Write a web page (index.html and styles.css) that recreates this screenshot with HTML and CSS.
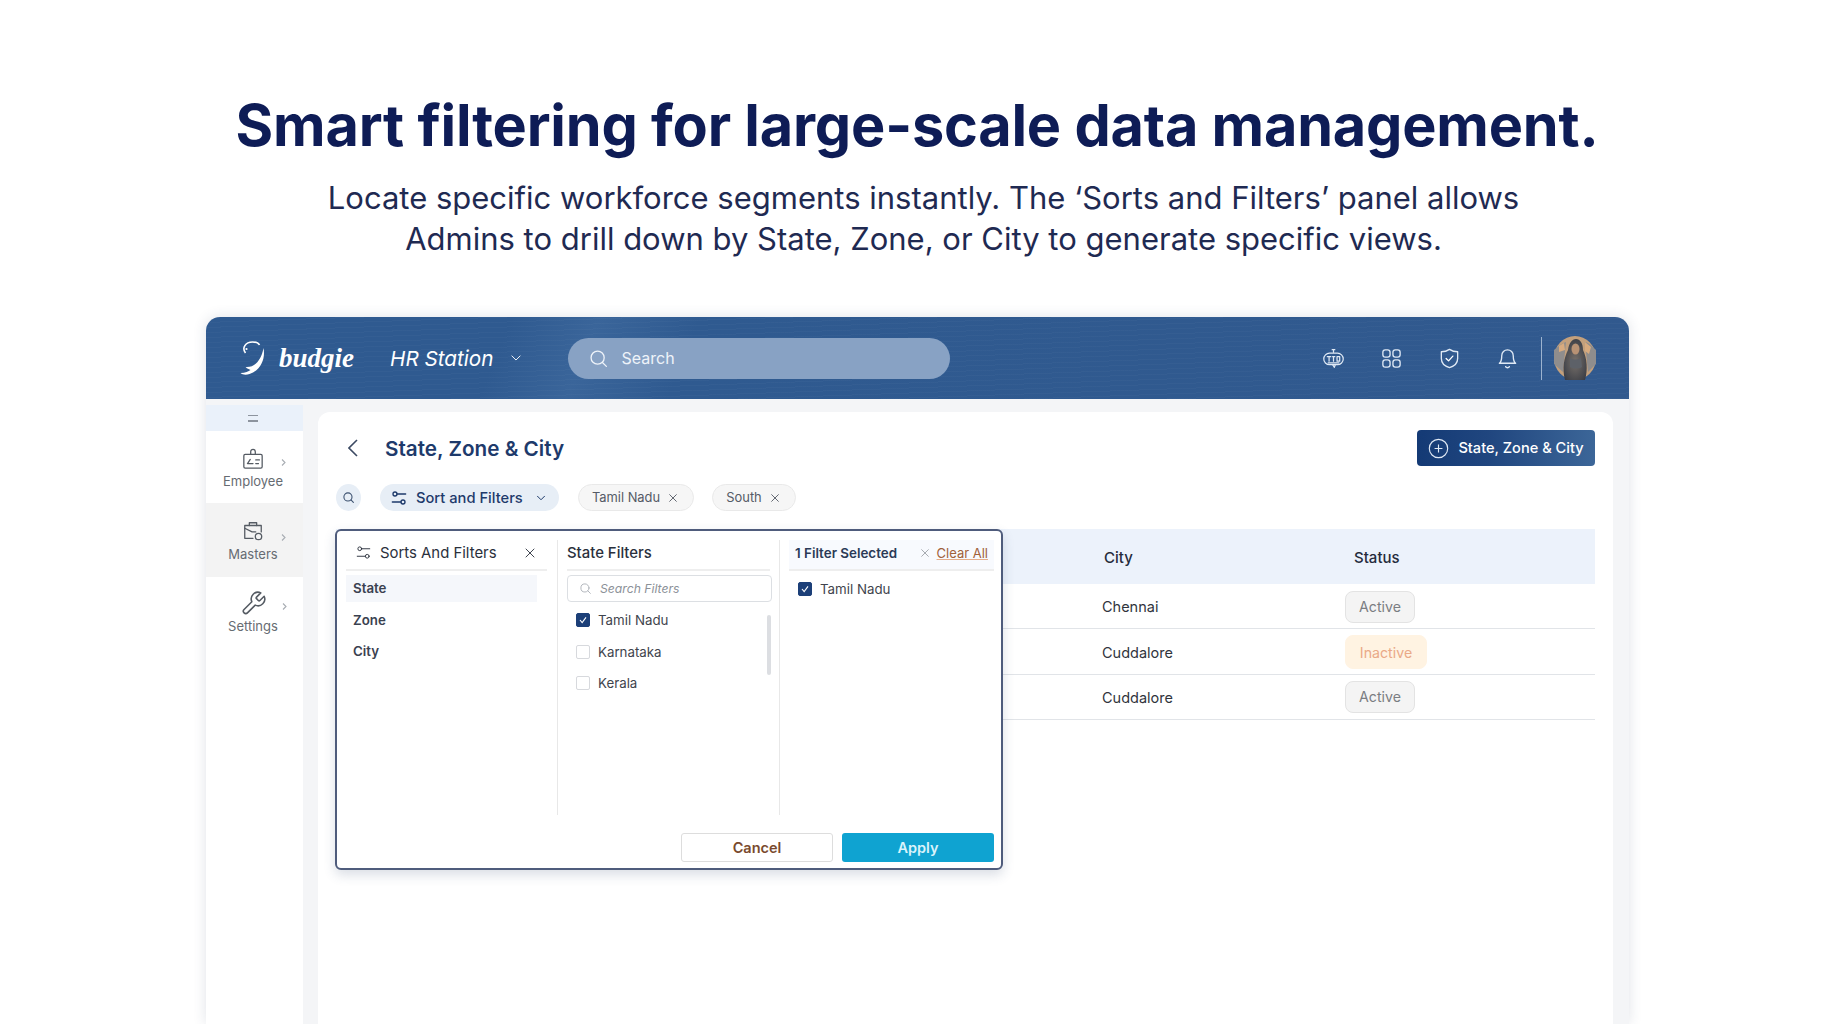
FILE: index.html
```html
<!DOCTYPE html>
<html>

<head>
    <title>HR Station - State, Zone &amp; City</title>
    <link rel="stylesheet" href="styles.css">
</head>

<body>
    <svg class="sprites" width="0" height="0">
        <symbol id="i-search" viewBox="0 0 24 24"><circle cx="11" cy="11" r="7.5"/><path d="M16.5 16.5 21 21"/></symbol>
        <symbol id="i-down" viewBox="0 0 24 24"><path d="M5 8.5l7 7 7-7"/></symbol>
        <symbol id="i-right" viewBox="0 0 24 24"><path d="M8 4l8 8-8 8"/></symbol>
        <symbol id="i-x" viewBox="0 0 24 24"><path d="M4 4l16 16M20 4 4 20"/></symbol>
        <symbol id="i-sliders" viewBox="0 0 24 24"><circle cx="6" cy="6" r="3"/><path d="M9 6h13M2 18h13"/><circle cx="18" cy="18" r="3"/></symbol>
    </svg>

    <header class="hero">
        <h1>Smart filtering for large-scale data management.</h1>
        <p>Locate specific workforce segments instantly. The ‘Sorts and Filters’ panel allows<br>Admins to drill down by State, Zone, or City to generate specific views.</p>
    </header>

    <div class="app">
        <div class="topbar">
            <svg class="logo" viewBox="0 0 26 36">
                <path class="logo-ring" d="M6 13C2 8 6 2 13 2c3 0 6 1 7 3"/>
                <circle class="logo-eye" cx="7" cy="9" r="1.1"/>
                <path class="logo-body" d="M24 8c2 10-2 22-14 26-3 1-7 1-9-1 5 0 8-2 10-3-3-1-5-3-5-3 9 1 16-7 18-19z"/>
            </svg>
            <span class="brand">budgie</span>
            <span class="product">HR Station</span>
            <svg class="icon product-caret"><use href="#i-down"/></svg>
            <div class="top-search">
                <svg class="icon"><use href="#i-search"/></svg>
                <span>Search</span>
            </div>
            <div class="top-icons">
                <svg class="top-icon" viewBox="0 0 26 26">
                    <path d="M13 6V3.5M11.5 3h3"/>
                    <rect x="2" y="7" width="22" height="13" rx="6.5"/>
                    <path d="M6 11h4M8 11v5M12 11h2.500M13 11v5M17 11h3v5h-3zM7 18h12M12 20l2 3 1-3"/>
                </svg>
                <svg class="top-icon" viewBox="0 0 24 24">
                    <rect x="3" y="3" width="7.500" height="7.500" rx="2.500"/>
                    <rect x="13.500" y="3" width="7.500" height="7.500" rx="2.500"/>
                    <rect x="3" y="13.500" width="7.500" height="7.500" rx="2.500"/>
                    <rect x="13.500" y="13.500" width="7.500" height="7.500" rx="2.500"/>
                </svg>
                <svg class="top-icon" viewBox="0 0 24 24">
                    <path d="M12 2.500c3 2 6 2.500 8.500 2.500v7c0 5-3.500 8-8.500 9.500C7 20 3.500 17 3.500 12V5C6 5 9 4.500 12 2.500z"/>
                    <path class="tick" d="M8.500 12l2.500 2.500 4.500-5"/>
                </svg>
                <svg class="top-icon" viewBox="0 0 24 24">
                    <path d="M6 9a6 6 0 0 1 12 0c0 6 2.500 8 2.500 8h-17S6 15 6 9z"/>
                    <path d="M10 20.500a2.300 2.300 0 0 0 4 0"/>
                </svg>
            </div>
            <span class="top-divider"></span>
            <svg class="avatar" viewBox="0 0 42 44">
                <defs>
                    <radialGradient id="hair" cx="50%" cy="55%" r="60%">
                        <stop offset="0" stop-color="#77706a"/>
                        <stop offset="1" stop-color="#3a3d45"/>
                    </radialGradient>
                </defs>
                <ellipse cx="21" cy="22" rx="21" ry="22" fill="#c3a07c"/>
                <path d="M0 14c4-4 9-7 12-8l-3 30L0 28zM42 14c-4-4-8-8-11-8l3 30 8-8z" fill="#8f8d8d"/>
                <path d="M5 10l5-3 1 7-6 2zM31 6l6 5-2 7-4-3z" fill="#d8ab7f"/>
                <path d="M11 44C8 32 10 22 14 14c1-7 4-11 8-11s7 4 7 11c4 8 5 20 2 30z" fill="url(#hair)"/>
                <ellipse cx="21.500" cy="13" rx="4" ry="5.500" fill="#b89274"/>
                <path d="M16 22c3 2 8 2 11 0l1 9c-3 2-9 2-12 0z" fill="#5d6168"/>
            </svg>
        </div>

        <div class="workspace">
            <nav class="sidebar">
                <div class="nav-toggle"><span></span><span></span></div>
                <a class="nav-item nav-employee">
                    <span class="nav-glyph">
                        <i></i>
                        <svg class="nav-icon" viewBox="0 0 24 24">
                            <path d="M9.500 7V4a2.500 2.500 0 0 1 5 0v3"/>
                            <rect x="2" y="7" width="20" height="15" rx="1.500"/>
                            <path d="M9 12.500l-3 4.500h6M15 13h4M15 17h3"/>
                        </svg>
                        <svg class="nav-caret"><use href="#i-right"/></svg>
                    </span>
                    <span class="nav-label">Employee</span>
                </a>
                <a class="nav-item nav-masters">
                    <span class="nav-glyph">
                        <i></i>
                        <svg class="nav-icon" viewBox="0 0 24 24">
                            <path d="M8 6V3h8v3"/>
                            <path d="M12 20H3V6h18v7"/>
                            <path d="M3 9l8 4h4"/>
                            <circle cx="18" cy="18" r="3.500"/>
                        </svg>
                        <svg class="nav-caret"><use href="#i-right"/></svg>
                    </span>
                    <span class="nav-label">Masters</span>
                </a>
                <a class="nav-item nav-settings">
                    <span class="nav-glyph">
                        <i></i>
                        <svg class="nav-icon nav-icon-big" viewBox="0 0 24 24">
                            <path d="M14.700 6.300a1 1 0 0 0 0 1.400l1.600 1.600a1 1 0 0 0 1.400 0l3.770-3.770a6 6 0 0 1-7.940 7.940l-6.910 6.910a2.120 2.120 0 0 1-3-3l6.910-6.910a6 6 0 0 1 7.940-7.940l-3.760 3.760z"/>
                        </svg>
                        <svg class="nav-caret"><use href="#i-right"/></svg>
                    </span>
                    <span class="nav-label">Settings</span>
                </a>
            </nav>

            <main class="content">
                <div class="page-head">
                    <svg class="back" viewBox="0 0 10 18"><path d="M9 1 1 9l8 8"/></svg>
                    <h2>State, Zone &amp; City</h2>
                    <button class="add-btn">
                        <svg viewBox="0 0 24 24"><circle cx="12" cy="12" r="10.500"/><path d="M12 7.500v9M7.500 12h9"/></svg>
                        State, Zone &amp; City
                    </button>
                </div>

                <div class="filter-row">
                    <span class="round-search"><svg class="icon"><use href="#i-search"/></svg></span>
                    <span class="sort-pill">
                        <svg class="icon"><use href="#i-sliders"/></svg>
                        Sort and Filters
                        <svg class="icon pill-caret"><use href="#i-down"/></svg>
                    </span>
                    <span class="chip chip-state">Tamil Nadu <svg class="icon"><use href="#i-x"/></svg></span>
                    <span class="chip chip-zone">South <svg class="icon"><use href="#i-x"/></svg></span>
                </div>

                <div class="grid-table">
                    <div class="grid-row grid-head">
                        <span></span>
                        <span class="head-city">City</span>
                        <span class="head-status">Status</span>
                    </div>
                    <div class="grid-row">
                        <span></span><span>Chennai</span><span><b class="badge">Active</b></span>
                    </div>
                    <div class="grid-row">
                        <span></span><span>Cuddalore</span><span><b class="badge badge-off">Inactive</b></span>
                    </div>
                    <div class="grid-row">
                        <span></span><span>Cuddalore</span><span><b class="badge">Active</b></span>
                    </div>
                </div>

                <section class="panel">
                    <div class="panel-cols">
                        <div class="col col-types">
                            <div class="col-head">
                                <svg class="icon head-sliders"><use href="#i-sliders"/></svg>
                                <span>Sorts And Filters</span>
                                <svg class="icon head-close"><use href="#i-x"/></svg>
                            </div>
                            <div class="type-row type-on">State</div>
                            <div class="type-row">Zone</div>
                            <div class="type-row">City</div>
                        </div>
                        <div class="col col-values">
                            <div class="col-head">State Filters</div>
                            <div class="filter-search">
                                <svg class="icon"><use href="#i-search"/></svg>
                                <span>Search Filters</span>
                            </div>
                            <div class="value-list">
                                <div class="check-row"><span class="box box-on"><svg viewBox="0 0 14 14"><path d="M3.500 7l2.500 3 4.500-6"/></svg></span>Tamil Nadu</div>
                                <div class="check-row"><span class="box"></span>Karnataka</div>
                                <div class="check-row"><span class="box"></span>Kerala</div>
                                <span class="scroll-thumb"></span>
                            </div>
                        </div>
                        <div class="col col-picked">
                            <div class="col-head picked-head">
                                <span class="picked-count">1 Filter Selected</span>
                                <svg class="icon clear-x"><use href="#i-x"/></svg>
                                <a class="clear-all">Clear All</a>
                            </div>
                            <div class="check-row picked-row"><span class="box box-on"><svg viewBox="0 0 14 14"><path d="M3.500 7l2.500 3 4.500-6"/></svg></span>Tamil Nadu</div>
                        </div>
                    </div>
                    <div class="panel-foot">
                        <button class="btn-cancel">Cancel</button>
                        <button class="btn-apply">Apply</button>
                    </div>
                </section>
            </main>
        </div>
    </div>
</body>

</html>
```
FILE: styles.css
```css
html,
body {
    margin: 0;
    height: 1024px;
    overflow: hidden;
    background: #fff;
    font-family: "Inter", "Liberation Sans", sans-serif;
}
.sprites {
    position: absolute;
}
.icon {
    width: 16px;
    height: 16px;
    fill: none;
    stroke: currentColor;
    stroke-width: 2;
    stroke-linecap: round;
    stroke-linejoin: round;
    flex: none;
}

/* hero */
.hero {
    height: 317px;
    text-align: center;
    box-sizing: border-box;
    padding-top: 88px;
}
.hero h1 {
    margin: 0;
    font-size: 57.600px;
    line-height: 74px;
    font-weight: 700;
    color: #0e1c56;
    letter-spacing: -0.2px;
}
.hero p {
    margin: 15px 0 0;
    padding-left: 13px;
    font-size: 31px;
    line-height: 41px;
    color: #1f2a52;
}

/* app frame */
.app {
    margin-left: 206px;
    width: 1423px;
    height: 707px;
    background: #f4f5f7;
    border-radius: 14px 14px 0 0;
    box-shadow: 0 0 14px rgba(40, 60, 90, 0.14);
    overflow: hidden;
}
.topbar {
    height: 82px;
    display: flex;
    align-items: center;
    padding-left: 33px;
    color: #fff;
    background:
        repeating-linear-gradient(178deg, rgba(255, 255, 255, 0.025) 0 1px, transparent 1px 5px),
        linear-gradient(112deg, #2f5a90 0 21%, #3a659a 27%, #2f5a90 34%, #31598e 100%);
}
.logo {
    width: 27px;
    height: 36px;
}
.logo-ring {
    fill: none;
    stroke: #fff;
    stroke-width: 1.6;
}
.logo-eye,
.logo-body {
    fill: #fff;
}
.brand {
    margin-left: 13px;
    font-family: "Liberation Serif", serif;
    font-size: 27px;
    font-weight: 700;
    font-style: italic;
}
.product {
    margin-left: 36px;
    font-size: 20.700px;
    font-style: italic;
}
.product-caret {
    margin-left: 15px;
    width: 14px;
    height: 14px;
    stroke-width: 1.6;
}
.top-search {
    margin-left: 45px;
    width: 382px;
    height: 41px;
    box-sizing: border-box;
    padding-left: 20px;
    display: flex;
    align-items: center;
    gap: 13px;
    border-radius: 21px;
    background: #88a2c4;
    font-size: 16px;
    color: #eef3f9;
}
.top-search .icon {
    width: 21px;
    height: 21px;
    stroke-width: 1.5;
}
.top-icons {
    margin-left: auto;
    display: flex;
    align-items: center;
    gap: 35px;
}
.top-icon {
    width: 23px;
    height: 23px;
    fill: none;
    stroke: #dfe9f5;
    stroke-width: 1.4;
    stroke-linecap: round;
    stroke-linejoin: round;
}
.top-icon .tick {
    stroke: #fff;
}
.top-divider {
    margin-left: 22px;
    width: 1px;
    height: 43px;
    background: #9db3cf;
}
.avatar {
    margin: 0 33px 0 12px;
    width: 42px;
    height: 44px;
}

/* sidebar */
.workspace {
    display: flex;
    height: 625px;
}
.sidebar {
    width: 97px;
    margin-top: 6px;
    background: #fff;
    flex: none;
}
.nav-toggle {
    height: 26px;
    box-sizing: border-box;
    padding-right: 3px;
    background: #eaf1fa;
    display: flex;
    flex-direction: column;
    align-items: center;
    justify-content: center;
    gap: 4px;
}
.nav-toggle span {
    width: 10px;
    height: 1.500px;
    background: #8d949e;
}
.nav-item {
    display: block;
    box-sizing: border-box;
    padding-right: 3px;
    text-align: center;
    color: #666b72;
}
.nav-employee {
    height: 72px;
    padding-top: 17px;
}
.nav-employee .nav-label {
    margin-top: 1px;
}
.nav-masters {
    height: 74px;
    padding-top: 17px;
    background: #f3f3f3;
}
.nav-masters .nav-caret {
    margin-top: 12px;
}
.nav-settings {
    height: 74px;
    padding-top: 13px;
}
.nav-settings .nav-label {
    margin-top: -1px;
}
.nav-glyph {
    display: grid;
    grid-template-columns: 1fr auto 1fr;
    align-items: center;
    justify-items: center;
}
.nav-icon {
    width: 22px;
    height: 22px;
    fill: none;
    stroke: #555b63;
    stroke-width: 1.400;
    stroke-linecap: round;
    stroke-linejoin: round;
}
.nav-icon-big {
    width: 27px;
    height: 27px;
}
.nav-caret {
    width: 9px;
    height: 9px;
    fill: none;
    stroke: #a8adb3;
    stroke-width: 3;
    margin: 6px 0 0 3px;
}
.nav-label {
    display: block;
    margin-top: 2px;
    font-size: 13px;
    line-height: 20px;
}

/* content card */
.content {
    position: relative;
    margin: 13px 16px 0 15px;
    flex: 1;
    box-sizing: border-box;
    padding: 18px 18px 0 18px;
    background: #fff;
    border-radius: 12px 12px 0 0;
}
.page-head {
    display: flex;
    align-items: center;
    height: 36px;
}
.back {
    margin-left: 12px;
    width: 10px;
    height: 18px;
    fill: none;
    stroke: #3c4a63;
    stroke-width: 1.6;
}
.page-head h2 {
    margin: 0 0 0 27px;
    font-size: 20.700px;
    font-weight: 600;
    color: #1e3a6b;
}
.add-btn {
    margin-left: auto;
    width: 178px;
    height: 36px;
    display: flex;
    align-items: center;
    justify-content: center;
    gap: 9px;
    border: 0;
    border-radius: 4px;
    color: #fff;
    font: 500 14.600px "Inter", sans-serif;
    background: linear-gradient(90deg, #143a75, #20467f 40%, #3c6698);
}
.add-btn svg {
    width: 21px;
    height: 21px;
    fill: none;
    stroke: #dfe8f4;
    stroke-width: 1.300;
}
.filter-row {
    display: flex;
    align-items: center;
    margin-top: 18px;
    height: 27px;
}
.round-search {
    width: 25px;
    height: 27px;
    border-radius: 50%;
    background: #e7eef6;
    color: #3c5170;
    display: flex;
    align-items: center;
    justify-content: center;
}
.round-search .icon {
    width: 13px;
    height: 13px;
}
.sort-pill {
    margin-left: 19px;
    width: 179px;
    height: 27px;
    box-sizing: border-box;
    padding-left: 11px;
    display: flex;
    align-items: center;
    gap: 9px;
    border-radius: 14px;
    background: #e7eef6;
    color: #1e3a6b;
    font-size: 14.700px;
    font-weight: 500;
}
.sort-pill .pill-caret {
    margin-left: 3px;
    width: 12px;
    height: 12px;
}
.chip {
    height: 27px;
    box-sizing: border-box;
    display: flex;
    align-items: center;
    justify-content: center;
    gap: 8px;
    border: 1px solid #e9e9e9;
    border-radius: 14px;
    background: #f6f6f6;
    color: #555b66;
    font-size: 12.900px;
    padding-right: 2px;
}
.chip .icon {
    width: 10px;
    height: 10px;
    stroke-width: 2.200;
}
.chip-state {
    margin-left: 19px;
    width: 116px;
}
.chip-zone {
    margin-left: 18px;
    width: 84px;
}

/* table behind the panel */
.grid-table {
    margin-top: 18px;
}
.grid-row {
    display: grid;
    grid-template-columns: 766px 243px 1fr;
    align-items: center;
    height: 45.400px;
    box-sizing: border-box;
    padding-top: 1px;
    border-bottom: 1px solid #e1e4e8;
    color: #30343c;
    font-size: 14.500px;
}
.grid-head {
    height: 55px;
    padding-top: 2px;
    background: #ecf2fb;
    border-bottom: 0;
    font-size: 15px;
    font-weight: 500;
    color: #252b3b;
}
.head-city {
    padding-left: 2px;
}
.head-status {
    padding-left: 9px;
}
.badge {
    display: inline-block;
    box-sizing: border-box;
    width: 70px;
    height: 32px;
    line-height: 30px;
    text-align: center;
    border: 1px solid #e3e3e3;
    border-radius: 8px;
    background: #f4f4f4;
    color: #7a7d82;
    font-size: 14.200px;
    font-weight: 400;
}
.badge-off {
    width: 82px;
    height: 34px;
    line-height: 33px;
    border-color: #fff3e2;
    background: #fff3e2;
    color: #eaa987;
}

/* filter panel */
.panel {
    position: absolute;
    left: 17px;
    top: 117px;
    width: 668px;
    height: 341px;
    box-sizing: border-box;
    border: 2px solid #4f5c7c;
    border-radius: 6px;
    background: #fff;
    box-shadow: 0 5px 12px rgba(50, 70, 110, 0.18);
}
.panel-cols {
    display: flex;
    margin-top: 9px;
    height: 275px;
}
.col {
    box-sizing: border-box;
    padding: 0 9px;
}
.col-types {
    width: 221px;
    padding-right: 10px;
    border-right: 1px solid #e8e8e8;
}
.col-values {
    width: 222px;
    border-right: 1px solid #e8e8e8;
}
.col-picked {
    flex: 1;
    padding-right: 7px;
}
.col-head {
    height: 31px;
    box-sizing: border-box;
    display: flex;
    align-items: center;
    border-bottom: 2px solid #eeeeee;
    color: #2a303c;
    font-size: 14.900px;
    font-weight: 500;
    padding-bottom: 4px;
    margin-bottom: 4px;
}
.col-types .col-head {
    font-weight: 400;
}
.head-sliders {
    margin: 0 9px 0 10px;
    width: 15px;
    height: 15px;
    stroke-width: 1.500;
}
.head-close {
    margin-left: auto;
    margin-right: 11px;
    width: 12px;
    height: 12px;
    stroke-width: 1.800;
}
.type-row {
    height: 27px;
    margin-bottom: 4.500px;
    padding-left: 7px;
    width: 184px;
    line-height: 27px;
    font-size: 13.300px;
    font-weight: 600;
    color: #3a4150;
}
.type-on {
    background: #f5f7fb;
}
.filter-search {
    height: 27px;
    width: 205px;
    box-sizing: border-box;
    padding-left: 11px;
    display: flex;
    align-items: center;
    gap: 8px;
    border: 1.500px solid #dcdfe3;
    border-radius: 4px;
    color: #8c9198;
    font-size: 12.200px;
    font-style: italic;
}
.filter-search .icon {
    width: 13px;
    height: 13px;
    stroke: #a7acb2;
    stroke-width: 1.600;
}
.value-list {
    position: relative;
    margin-top: 4.500px;
}
.check-row {
    display: flex;
    align-items: center;
    gap: 8px;
    height: 27px;
    margin-bottom: 4.500px;
    padding-left: 9px;
    color: #3f444d;
    font-size: 13.300px;
}
.box {
    width: 14px;
    height: 14px;
    box-sizing: border-box;
    border: 1px solid #d7d9dd;
    border-radius: 2px;
    background: #fff;
}
.box-on {
    background: #1c3f78;
    border-color: #1c3f78;
}
.box-on svg {
    display: block;
    width: 12px;
    height: 12px;
    fill: none;
    stroke: #fff;
    stroke-width: 1.300;
}
.scroll-thumb {
    position: absolute;
    right: -1px;
    top: 8px;
    width: 4px;
    height: 60px;
    border-radius: 2px;
    background: #dcdee2;
}
.picked-head {
    font-size: 13.400px;
    font-weight: 600;
    padding-left: 6px;
    background: #f8fafe;
    color: #2b3a57;
}
.clear-x {
    margin-left: auto;
    width: 10px;
    height: 10px;
    stroke: #8b8f96;
    stroke-width: 1.800;
}
.clear-all {
    margin: 0 6px 0 7px;
    color: #a0603a;
    font-size: 13px;
    font-weight: 400;
    text-decoration: underline;
    text-decoration-color: #e5ae8b;
}
.picked-row {
    padding-left: 9px;
}
.panel-foot {
    display: flex;
    justify-content: flex-end;
    gap: 9px;
    margin-top: 18px;
    padding-right: 7px;
}
.panel-foot button {
    width: 152px;
    height: 29px;
    border-radius: 3px;
    font: 600 14.500px "Inter", sans-serif;
    padding: 0;
}
.btn-cancel {
    background: #fff;
    border: 1px solid #dddddd;
    color: #7a4a2e;
}
.btn-apply {
    background: #0fa3d1;
    border: 0;
    color: #d9f3fb;
}
```
